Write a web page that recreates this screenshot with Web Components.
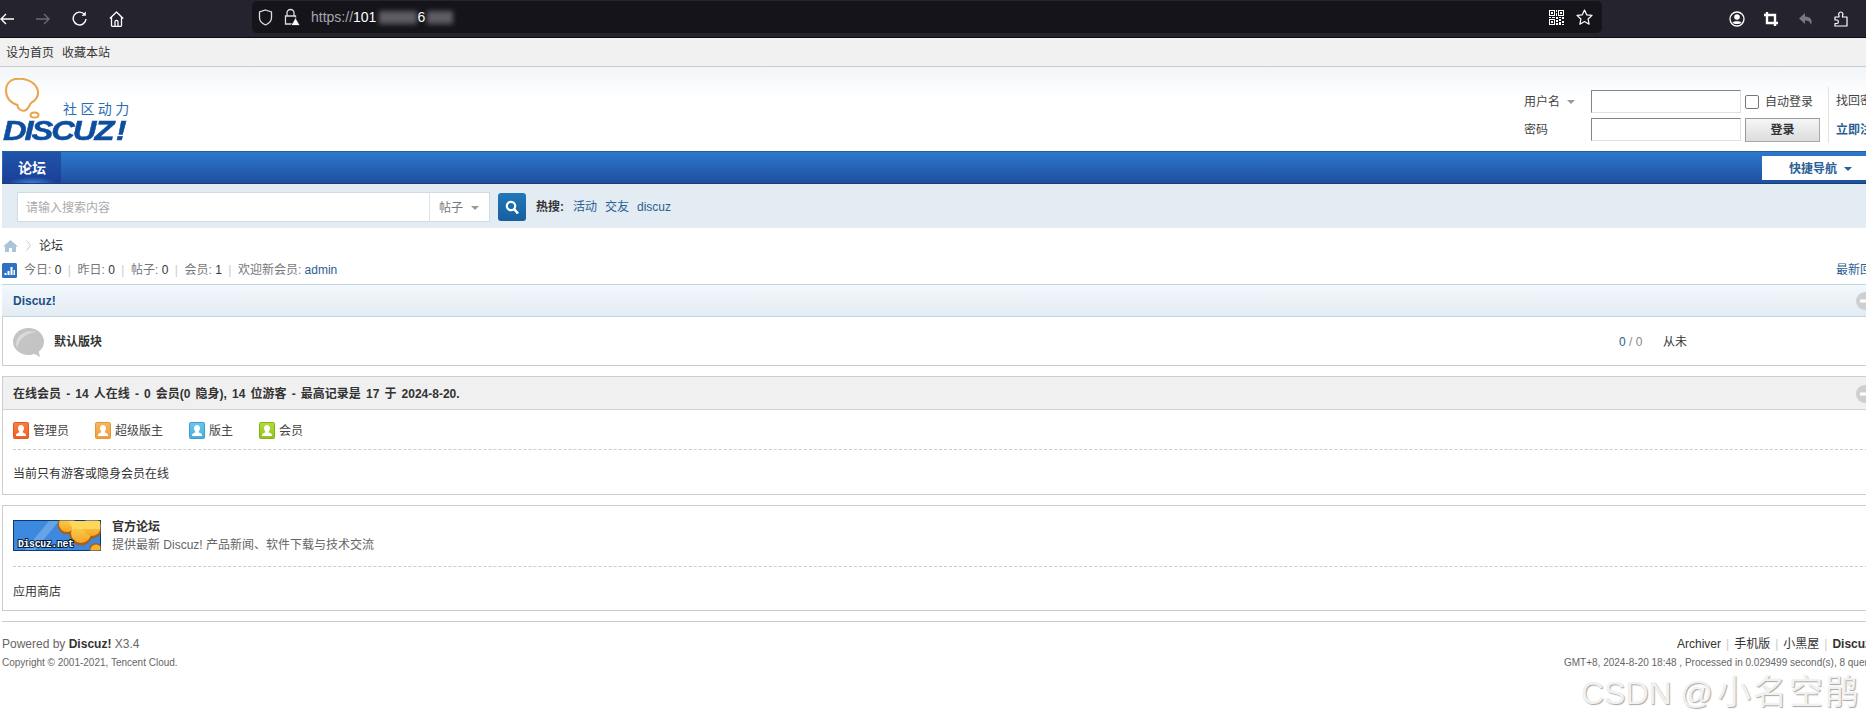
<!DOCTYPE html>
<html lang="zh-CN">
<head>
<meta charset="utf-8">
<title>Discuz!</title>
<style>
  html, body { margin: 0; padding: 0; height: 726px; overflow: hidden; background: #fff; }
  body { font: 12px/16px "Liberation Sans", "Noto Sans CJK SC", sans-serif; color: #444; }
  #page { width: 1884px; }
</style>
</head>
<body>
<div id="page">
  <browser-bar></browser-bar>
  <top-strip></top-strip>
  <site-header></site-header>
  <nav-bar></nav-bar>
  <search-band></search-band>
  <bread-crumb></bread-crumb>
  <stats-line></stats-line>
  <forum-box heading="Discuz!" tone="blue"><forum-row></forum-row></forum-box>
  <forum-box heading="在线会员 - 14 人在线 - 0 会员(0 隐身), 14 位游客 - 最高记录是 17 于 2024-8-20." tone="grey"><online-list></online-list></forum-box>
  <link-box></link-box>
  <site-footer></site-footer>
</div>
<water-mark></water-mark>

<script>
// small helper, every element is just a template in an open shadow root
function define(name, html) {
  const template = document.createElement("template");
  template.innerHTML = html;
  customElements.define(name, class extends HTMLElement {
    constructor() {
      super();
      this.attachShadow({ mode: "open" });
    }
    connectedCallback() {
      this.shadowRoot.appendChild(template.content.cloneNode(true));
      if (this.init) this.init();
    }
  });
}

define("browser-bar", /*html*/`
  <style>
    :host { display: flex; box-sizing: border-box; height: 38px; background: #25242e; border-bottom: 1px solid #0c0c10; width: 1866px; }
    .nav { display: flex; align-items: center; height: 37px; }
    .nav svg { display: block; margin-left: 22px; flex: none; }
    .nav svg:first-child { margin-left: 0; }
    .url { box-sizing: border-box; margin: 1px 0 0 128px; width: 1350px; height: 32px; background: #15141b; border-radius: 5px;
           display: flex; align-items: center; padding-left: 6px; font: 14px "Liberation Sans", sans-serif; color: #fff; }
    .url .grey { color: #a8a8ad; }
    .url .smudge { display: inline-block; height: 13px; background: #8e8e93; filter: blur(2.5px); opacity: .6; }
    .qr { margin-left: auto; margin-right: 12px; }
    .star { margin-right: 9px; }
    .right { display: flex; align-items: center; height: 37px; margin-left: 127px; }
    .right svg { display: block; flex: none; }
  </style>
  <div class="nav">
    <svg width="14" height="12" viewBox="0 0 14 12" fill="none" stroke="#fff" stroke-width="1.4"><path d="M14 6H1M6 1L1 6l5 5"/></svg>
    <svg width="14" height="12" viewBox="0 0 14 12" fill="none" stroke="#6a6a72" stroke-width="1.4"><path d="M0 6h13M8 1l5 5-5 5"/></svg>
    <svg width="15" height="15" viewBox="0 0 15 15" fill="none" stroke="#fff" stroke-width="1.4"><path d="M12.5 3.4A6.4 6.4 0 1 0 14 8"/><path d="M9.6 4.7h4.2V.5z" fill="#fff" stroke="none"/></svg>
    <svg width="15" height="16" viewBox="0 0 15 16" fill="none" stroke="#fff" stroke-width="1.3" stroke-linejoin="round"><path d="M.8 7.5L7.5 1l6.7 6.5M2.5 6v8.5a.8.8 0 0 0 .8.8h8.4a.8.8 0 0 0 .8-.8V6M6 15v-4.2a1.5 1.5 0 0 1 3 0V15"/></svg>
  </div>
  <div class="url">
    <svg width="15" height="17" viewBox="0 0 15 17" fill="none" stroke="#ddd" stroke-width="1.3"><path d="M7.5 1l6 2v5.500c0 3.700-2.800 6.200-6 7.500-3.200-1.300-6-3.800-6-7.500V3z"/></svg>
    <svg style="margin-left:11px" width="16" height="18" viewBox="0 0 16 18" fill="none" stroke="#ddd" stroke-width="1.3"><path d="M3 8V5a3.500 3.500 0 0 1 7 0v3M1.500 8h10v8h-10z"/><path d="M11.500 9.500L16 17.500H7z" fill="#fff" stroke="#15141b" stroke-width=".8"/></svg>
    <span style="margin-left:11px"><span class="grey">https://</span>101</span>
    <span class="smudge" style="width:38px;margin-left:3px"></span>
    <span>6</span>
    <span class="smudge" style="width:26px;margin-left:2px"></span>
    <svg class="qr" width="15" height="15" viewBox="0 0 15 15" fill="#fff"><path d="M0 0h6v6H0zm1 1v4h4V1zm1 1h2v2H2zm7-2h6v6H9zm1 1v4h4V1zm1 1h2v2h-2zM0 9h6v6H0zm1 1v4h4v-4zm1 1h2v2H2z"/><path d="M7 0h1v2H7zm0 3h1v3H7zM0 7h2v1H0zm3 0h3v1H3zm4 0h2v2H7zm3 0h2v1h-2zm3 0h2v2h-2zM7 10h2v2H7zm3-1h2v2h-2zm3 2h2v2h-2zm-3 1h2v3h-2zm-3 1h2v2H7zm6 1h2v1h-2z"/></svg>
    <svg class="star" width="17" height="16" viewBox="0 0 17 16" fill="none" stroke="#fff" stroke-width="1.2" stroke-linejoin="round"><path d="M8.500 1l2.200 4.800 5.300.6-3.900 3.600 1 5.200-4.600-2.600-4.600 2.600 1-5.200L1 6.400l5.300-.6z"/></svg>
  </div>
  <div class="right">
    <svg width="16" height="16" viewBox="0 0 16 16"><circle cx="8" cy="8" r="7" fill="none" stroke="#fff" stroke-width="1.300"/><circle cx="8" cy="6" r="2.800" fill="#fff"/><path d="M3.500 11.500c1.500-1.700 7.500-1.700 9 0-1.500 2-7.500 2-9 0z" fill="#fff"/></svg>
    <svg style="margin-left:19px" width="14" height="14" viewBox="0 0 14 14" fill="none" stroke="#fff" stroke-width="2.400"><path d="M0 3h11v11M3 0v11h11"/></svg>
    <svg style="margin-left:21px" width="14" height="14" viewBox="0 0 14 14" fill="#77777d"><path d="M6 1L0 6.500 6 12V8.500c3 0 5 .7 6 4.500 2-5-.5-8.500-6-8.500z"/></svg>
    <svg style="margin-left:21px" width="14" height="16" viewBox="0 0 14 16" fill="none" stroke="#fff" stroke-width="1.200" stroke-linejoin="round"><path d="M1 6h4V4.500C4 3 5 1 6.800 1S9.500 3 8.500 4.500V6H13v9H1v-2.500h2c1.800 0 1.800-3.500 0-3.500H1z"/></svg>
  </div>
`);

define("top-strip", /*html*/`
  <style>
    :host { display: flex; gap: 8px; box-sizing: border-box; height: 29px; padding: 7px 0 0 6px; background: #f1f1f1; border-bottom: 1px solid #cdcdcd; color: #333; width: 1866px; }
  </style>
  <span>设为首页</span><span>收藏本站</span>
`);

define("site-header", /*html*/`
  <style>
    :host { display: flex; box-sizing: border-box; height: 84px; background: linear-gradient(#f2f6f9, #fff 32px); }
    .logo { display: grid; grid-template-columns: 60px auto; padding: 11px 0 0 3px; height: 73px; box-sizing: border-box; }
    .logo svg { display: block; margin-left: 2px; }
    .cn { font-size: 14px; line-height: 14px; letter-spacing: 3.400px; color: #2a6db5; padding-top: 24px; }
    .en { grid-column: 1 / 3; margin-top: -1px; height: 26px; font: italic bold 28px/26px "Liberation Sans", sans-serif; letter-spacing: -1.800px;
          color: #0f4e9f; -webkit-text-stroke: .5px #0f4e9f; transform: scaleX(1.17); transform-origin: left; white-space: nowrap; }
    .en span { margin-left: 3px; }
    .login { margin-left: auto; display: grid; grid-template-columns: 67px 150px 75px auto; grid-auto-rows: 23px; column-gap: 0; row-gap: 5px; padding-top: 23px; }
    .lbl { display: flex; align-items: center; color: #444; gap: 7px; }
    .arrow { width: 0; height: 0; border: 4px solid transparent; border-top-color: #999; border-bottom: 0; }
    input { box-sizing: border-box; width: 150px; height: 23px; margin: 0; padding: 0; background: #fff; border: 1px solid; border-color: #848484 #e0e0e0 #e0e0e0 #848484; }
    .auto { display: flex; align-items: center; gap: 6px; padding-left: 4px; white-space: nowrap; color: #444; width: 80px; }
    .box { width: 12px; height: 12px; border: 1px solid #777; border-radius: 2px; background: #fff; flex: none; }
    button { margin-left: 4px; width: 75px; height: 24px; padding: 0; font: inherit; color: #333; font-weight: bold; border: 1px solid #999; border-color: #999 #aaa #aaa #999; background: linear-gradient(#f6f6f6, #dcdcdc); }
    .more { grid-column: 4; grid-row: 1 / 3; margin: -3px 0 -2px 12px; padding-left: 7px; border-left: 1px solid #e2e2e2; display: flex; flex-direction: column; gap: 13px; padding-top: 6px; white-space: nowrap; }
    .more b { color: #2b6095; }
  </style>
  <div class="logo">
    <svg width="40" height="41" viewBox="0 0 40 41" fill="none" stroke="#e8a54b" stroke-width="2">
      <path d="M10 1C18 0 28 2 32 10c3 7-1 12-6 15-2 2-2 6-6 7.500-4 1-8-2.500-7.500-5.500C6 25 1 20 1 12 1 6 5 2 10 1z"/>
      <ellipse cx="29.500" cy="37" rx="4" ry="2.600"/>
    </svg>
    <div class="cn">社区动力</div>
    <div class="en">DISCUZ<span>!</span></div>
  </div>
  <div class="login">
    <div class="lbl">用户名 <span class="arrow"></span></div>
    <input>
    <div class="auto"><span class="box"></span>自动登录</div>
    <div class="more"><span>找回密码</span><b>立即注册</b></div>
    <div class="lbl">密码</div>
    <input>
    <button>登录</button>
  </div>
`);

define("nav-bar", /*html*/`
  <style>
    :host { display: flex; box-sizing: border-box; height: 33px; margin-left: 2px; background: linear-gradient(#2d78cd, #1f4f9f); border-top: 1px solid #2a5f9e; border-bottom: 1px solid #173f7e; }
    .tab { margin-left: 1px; width: 58px; box-sizing: border-box; padding: 8px 0 0 15px; font-size: 14px; font-weight: bold; color: #fff;
           background: radial-gradient(ellipse 24px 6px at 50% 100%, #3d7fd8, transparent), linear-gradient(#1f55ab, #1b3f96); }
    .quick { margin: 4px 0 0 auto; width: 122px; height: 24px; box-sizing: border-box; background: #fff; padding: 1px 0 0 27px; display: flex; align-items: center; gap: 7px; font-weight: bold; color: #2b6095; }
    .arrow { width: 0; height: 0; border: 4px solid transparent; border-top-color: #2b6095; border-bottom: 0; }
  </style>
  <div class="tab">论坛</div>
  <div class="quick">快捷导航 <span class="arrow"></span></div>
`);

define("search-band", /*html*/`
  <style>
    :host { display: flex; align-items: flex-start; box-sizing: border-box; height: 44px; margin-left: 2px; padding: 8px 0 0 15px; background: #e3ebf3; }
    .field { box-sizing: border-box; width: 473px; height: 30px; display: flex; background: #fff; border: 1px solid #cfdbe6; line-height: 30px; }
    .ph { width: 411px; padding-left: 8px; box-sizing: border-box; color: #aaa; }
    .sel { flex: 1; border-left: 1px solid #dbe3ea; padding: 1px 0 0 9px; color: #777; display: flex; align-items: center; gap: 8px; }
    .arrow { width: 0; height: 0; border: 4px solid transparent; border-top-color: #999; border-bottom: 0; }
    .go { margin: 1px 0 0 8px; width: 28px; height: 28px; border-radius: 3px; background: linear-gradient(#2377bb, #165f9f); display: flex; align-items: center; justify-content: center; }
    .hot { display: flex; gap: 8px; margin: 7px 0 0 10px; }
    .hot b { color: #333; margin-right: 1px; }
    .hot span { color: #2b6095; }
  </style>
  <div class="field">
    <div class="ph">请输入搜索内容</div>
    <div class="sel">帖子 <span class="arrow"></span></div>
  </div>
  <div class="go"><svg width="14" height="14" viewBox="0 0 14 14" fill="none" stroke="#fff" stroke-width="2.200"><circle cx="6" cy="6" r="4.200"/><path d="M9 9l4 4.500" stroke-width="2.600"/></svg></div>
  <div class="hot"><b>热搜:</b><span>活动</span><span>交友</span><span>discuz</span></div>
`);

define("bread-crumb", /*html*/`
  <style>
    :host { display: flex; align-items: center; box-sizing: border-box; height: 34px; padding: 1px 0 0 3px; color: #333; }
    svg { display: block; flex: none; }
  </style>
  <svg width="15" height="12" viewBox="0 0 15 12" fill="#a9c5d9"><path d="M7.500 0L15 6.500h-2V12H9V8H6v4H2V6.500H0z"/></svg>
  <svg style="margin:0 8px 0 8px" width="5" height="11" viewBox="0 0 5 11" fill="none" stroke="#c6c6c6"><path d="M.5.500L4.500 5.500.5 10.500"/></svg>
  <span>论坛</span>
`);

define("stats-line", /*html*/`
  <style>
    :host { display: flex; align-items: center; box-sizing: border-box; height: 16px; margin-bottom: 6px; padding-left: 2px; color: #777; white-space: nowrap; }
    svg { display: block; flex: none; margin-right: 7px; }
    em { font-style: normal; color: #ccc; padding: 0 6.500px; }
    i { font-style: normal; color: #333; }
    a { color: #2b6095; }
    .latest { margin-left: auto; color: #2b6095; }
  </style>
  <svg width="15" height="15" viewBox="0 0 15 15"><rect width="15" height="15" rx="1.500" fill="#2f70c2"/><path d="M2.500 10h2v2h-2zm3-2h2v4h-2zm3-4h2v8h-2zm3 3h1.500v5h-1.500z" fill="#fff"/></svg>
  <span>今日: <i>0</i></span><em>|</em><span>昨日: <i>0</i></span><em>|</em><span>帖子: <i>0</i></span><em>|</em><span>会员: <i>1</i></span><em>|</em><span>欢迎新会员: <a>admin</a></span>
  <span class="latest">最新回复</span>
`);

customElements.define("forum-box", class extends HTMLElement {
  constructor() {
    super();
    this.attachShadow({ mode: "open" });
  }
  connectedCallback() {
    const blue = this.getAttribute("tone") === "blue";
    this.shadowRoot.innerHTML = /*html*/`
      <style>
        :host { display: block; box-sizing: border-box; margin: 0 0 10px 2px; border: 1px solid #cdcdcd; }
        .head { display: flex; align-items: center; box-sizing: border-box; height: 33px; padding: 0 9px 0 10px; font-weight: bold; word-spacing: 1.800px; }
        .blue { margin: -1px -1px 0; padding-left: 11px; padding-right: 10px; color: #1d4f87; background: linear-gradient(#f2f8fc, #e3ecf3); border: 1px solid #c2d5e3; border-width: 1px 0; }
        .grey { padding-top: 2px; color: #333; background: #f0f0f0; border-bottom: 1px solid #cdd5dc; }
        svg { display: block; margin-left: auto; }
      </style>
      <div class="head ${blue ? "blue" : "grey"}">
        <span>${this.getAttribute("heading")}</span>
        <svg width="18" height="18" viewBox="0 0 18 18"><circle cx="9" cy="9" r="9" fill="#cfcfcf"/><rect x="4" y="7.500" width="10" height="3" fill="#fff"/></svg>
      </div>
      <slot></slot>`;
  }
});

define("forum-row", /*html*/`
  <style>
    :host { display: grid; grid-template-columns: 41px 1565px 44px 1fr; align-items: center; box-sizing: border-box; height: 48px; padding: 2px 0 0 10px; color: #333; }
    svg { display: block; }
    b { color: #333; }
    .n { color: #888; white-space: nowrap; }
    .n span { color: #2b6095; }
  </style>
  <svg width="31" height="29" viewBox="0 0 31 29"><ellipse cx="15.500" cy="13.500" rx="15.500" ry="13.500" fill="#c4c4c4"/><path d="M18 24l9 5-2-9z" fill="#c4c4c4"/><path d="M4 20C0 9 12 1 24 4 13 5 7 10 4 20z" fill="#dadada"/></svg>
  <b>默认版块</b>
  <span class="n"><span>0</span> / 0</span>
  <span>从未</span>
`);

const person = (edge, top, bottom) => `
  <svg width="16" height="17" viewBox="0 0 16 17"><rect x=".5" y=".5" width="15" height="16" rx="1" fill="url(#g)" stroke="${edge}"/>
  <defs><linearGradient id="g" x1="0" x2="0" y1="0" y2="1"><stop offset="0" stop-color="${top}"/><stop offset="1" stop-color="${bottom}"/></linearGradient></defs>
  <path d="M8 3c1.800 0 3 1.300 3 3.300 0 1.400-.6 2.500-1.300 3.200 0 1 1 1.400 2.300 2 1 .5 1 1.500 1 2.500H3c0-1 0-2 1-2.500 1.300-.6 2.300-1 2.300-2C5.600 8.800 5 7.700 5 6.300 5 4.300 6.200 3 8 3z" fill="#fff"/></svg>`;

define("legend-item", /*html*/`
  <style>
    :host { display: flex; align-items: center; gap: 4px; color: #444; }
    svg { display: block; }
  </style>
  <span id="icon" style="display:contents"></span><slot></slot>
`);
customElements.get("legend-item").prototype.init = function () {
  const [e, t, b] = this.getAttribute("colors").split(",");
  // every icon has its own gradient scope because it lives in its own shadow root
  this.shadowRoot.querySelector("#icon").innerHTML = person(e, t, b);
};

define("online-list", /*html*/`
  <style>
    :host { display: block; }
    .legend { display: flex; align-items: center; box-sizing: border-box; height: 40px; margin: 0 0 0 10px; padding-top: 2px; border-bottom: 1px dashed #cdcdcd; }
    .legend legend-item { margin-right: 26px; }
    .note { padding-left: 10px; height: 44px; line-height: 48px; color: #333; }
  </style>
  <div class="legend">
    <legend-item colors="#e25a22,#f9803f,#ef5f24">管理员</legend-item>
    <legend-item colors="#e39838,#f8b65f,#ee9f3b">超级版主</legend-item>
    <legend-item colors="#3a9fd0,#6cc6ee,#48ade0">版主</legend-item>
    <legend-item colors="#85b317,#b3dc3c,#93c31e">会员</legend-item>
  </div>
  <div class="note">当前只有游客或隐身会员在线</div>
`);

define("link-box", /*html*/`
  <style>
    :host { display: block; box-sizing: border-box; height: 106px; margin: 0 0 10px 2px; border: 1px solid #cdcdcd; color: #333; }
    .top { display: flex; box-sizing: border-box; height: 61px; margin-left: 10px; padding-top: 14px; border-bottom: 1px dashed #cdcdcd; }
    svg { display: block; flex: none; margin-right: 11px; }
    .txt b { display: block; margin-top: -1px; line-height: 17px; color: #333; }
    .txt span { display: block; line-height: 18px; color: #666; }
    .shop { padding-left: 10px; line-height: 50px; }
  </style>
  <div class="top">
    <svg width="88" height="31" viewBox="0 0 88 31">
      <defs><linearGradient id="sun" x1="0" x2="0" y1="0" y2="1"><stop offset="0" stop-color="#fdd757"/><stop offset="1" stop-color="#f5a628"/></linearGradient></defs>
      <rect width="88" height="31" fill="#0c3c78"/>
      <rect x="1" y="1" width="86" height="29" fill="#3d89e0"/>
      <path d="M12 30L36 1h10L22 30z" fill="#fff" opacity=".22"/>
      <g fill="#a9601c"><circle cx="54" cy="5" r="9.500"/><circle cx="68" cy="14" r="11.500"/><circle cx="79" cy="8" r="10.500"/><circle cx="83" cy="30" r="7"/></g>
      <g fill="url(#sun)"><circle cx="54" cy="4" r="8"/><circle cx="68" cy="13" r="10"/><circle cx="79" cy="7" r="9"/></g>
      <path d="M55 1h32v8H60z" fill="#fdd757"/>
      <circle cx="83" cy="30" r="5.500" fill="#f7b12e"/>
      <rect x="0" y="0" width="88" height="31" fill="none" stroke="#0c3c78"/>
      <text x="5" y="27" font-family="Liberation Mono, monospace" font-size="10" font-weight="bold" fill="#fff" stroke="#061f3f" stroke-width="2" paint-order="stroke" textLength="56">Discuz.net</text>
    </svg>
    <div class="txt"><b>官方论坛</b><span>提供最新 Discuz! 产品新闻、软件下载与技术交流</span></div>
  </div>
  <div class="shop">应用商店</div>
`);

define("site-footer", /*html*/`
  <style>
    :host { display: grid; grid-template-columns: 1562px auto; box-sizing: border-box; margin-left: 2px; padding-top: 13px; border-top: 1px solid #cdcdcd; white-space: nowrap; }
    .a { height: 18px; line-height: 18px; color: #666; }
    .a b { color: #333; }
    .s { font-size: 10px; line-height: 19px; color: #666; }
    .links { padding-left: 113px; color: #333; }
    em { font-style: normal; color: #ccc; padding: 0 5px; }
  </style>
  <div class="a">Powered by <b>Discuz!</b> X3.4</div>
  <div class="a links">Archiver<em>|</em>手机版<em>|</em>小黑屋<em>|</em><b>Discuz! Team</b></div>
  <div class="s">Copyright © 2001-2021, Tencent Cloud.</div>
  <div class="s">GMT+8, 2024-8-20 18:48 , Processed in 0.029499 second(s), 8 queries .</div>
`);

// lies over the page, it is the watermark of the screenshot
define("water-mark", /*html*/`
  <style>
    :host { position: absolute; left: 1581px; top: 670px; white-space: nowrap; color: #f1f1f1; font: 32px/44px "Liberation Sans", "Noto Sans CJK SC", sans-serif; text-shadow: 1px 1px 1px #a8a8a8; pointer-events: none; }
    span { font-size: 34px; letter-spacing: 2px; margin-left: 4px; }
  </style>
  CSDN @<span>小名空鹃</span>
`);
</script>
</body>
</html>
